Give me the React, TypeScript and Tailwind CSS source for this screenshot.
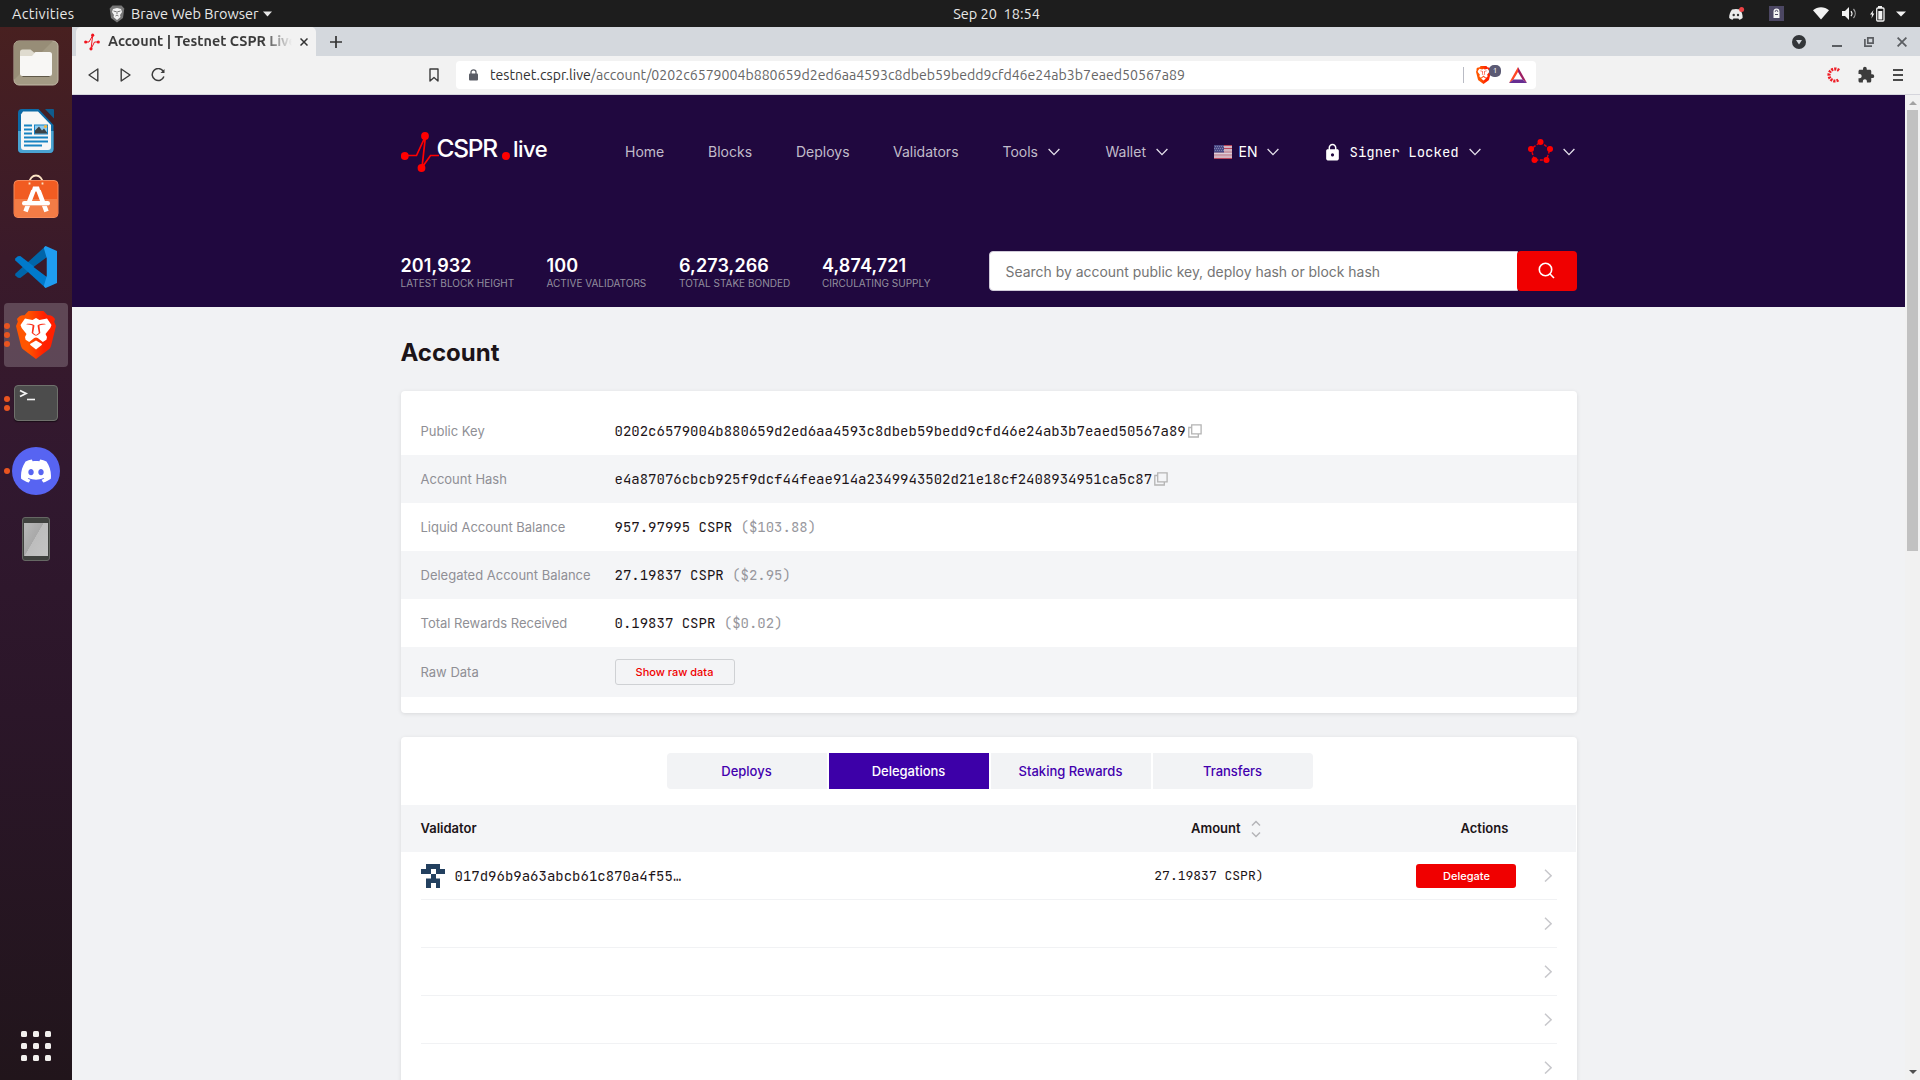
import React from "react";
import { SiDiscord } from "react-icons/si";
import { MdExtension, MdLock } from "react-icons/md";

/* ---------- shared ---------- */

const MONO = "font-['JetBrains_Mono','Liberation_Mono',monospace]";

function Chevron({ className = "" }: { className?: string }) {
  return (
    <svg className={`shrink-0 ${className}`} viewBox="0 0 12 8" width="12" height="8" fill="none" stroke="#e4e0ea" strokeWidth="1.3">
      <path d="M0.6 1 L6 6.6 L11.4 1" />
    </svg>
  );
}

/* ---------- desktop top bar ---------- */

function TopBar() {
  return (
    <header className="grid h-[27px] shrink-0 grid-cols-[1fr_auto_1fr] items-center bg-[#1d1d1d] text-[14.5px] leading-[27px] text-[#e8e8e8]">
      <div className="flex items-center pl-3">
        <span className="w-[97px] tracking-[0.3px]">Activities</span>
        <svg width="16" height="18" viewBox="0 0 16 18" className="mr-[6px]">
          <path d="M3.5 0.5h9l2.8 3-1.3 9.5L8 17.5 2 13 .7 3.5z" fill="#777" />
          <path d="M4 4l4-1 4 1 1 3-2 3 .5 2L8 15l-3.500-3L5 10 3 7z" fill="#f4f4f4" />
          <path d="M4.500 6l2.500.7M11.500 6 9 6.700M8 6v3M6.500 11l1.500-1 1.500 1" stroke="#777" strokeWidth="1" fill="none" />
        </svg>
        <span className="tracking-[-0.02px]">Brave Web Browser</span>
        <svg width="9" height="6" viewBox="0 0 9 6" className="ml-[5px]"><path d="M0 .5h9L4.500 5.500z" fill="#e8e8e8" /></svg>
      </div>
      <span className="mr-[-73px] whitespace-pre">Sep 20  18:54</span>
      <div className="flex items-center justify-end pr-[14px]">
        <svg width="17" height="14" viewBox="0 0 17 14" className="mr-[24px]">
          <path d="M4 2.500C7 1.800 9 1.800 12 2.500c2 2.700 2.800 5.600 2.600 8.500-1.200 1-2.300 1.500-3.400 1.800l-.8-1.300H5.400l-.8 1.300C3.500 12.500 2.400 12 1.200 11 1 8 2 5.200 4 2.500z" fill="#ececec" />
          <circle cx="5.700" cy="8" r="1.200" fill="#333" /><circle cx="10" cy="8" r="1.200" fill="#333" />
          <circle cx="13.600" cy="2.600" r="2.500" fill="#ec4245" />
        </svg>
        <svg width="15" height="15" viewBox="0 0 15 15" className="mr-[29px]">
          <rect width="15" height="15" fill="#4c4763" />
          <path d="M4.500 12V5.500a3 3 0 0 1 6 0V12z" fill="#f4f4f4" />
          <path d="M6.300 6V5.500a1.200 1.200 0 0 1 2.400 0V6M6 8.500h3" stroke="#4c4763" fill="none" />
        </svg>
        <svg width="16" height="13" viewBox="0 0 16 13" className="mr-[13px]"><path d="M0 3.200C4.500-.8 11.500-.8 16 3.200L8 12.500z" fill="#f2f2f2" /></svg>
        <svg width="16" height="13" viewBox="0 0 16 13" className="mr-[12px]">
          <path d="M0 4h3l4-4v13L3 9H0z" fill="#f2f2f2" />
          <path d="M9 4a4 4 0 0 1 0 5" stroke="#f2f2f2" strokeWidth="1.200" fill="none" />
          <path d="M11.500 2a7 7 0 0 1 0 9" stroke="#aaa" strokeWidth="1.200" fill="none" />
        </svg>
        <svg width="15" height="16" viewBox="0 0 15 16" className="mr-[11px]">
          <path d="M3.500 4 0 8.600h2L1.500 12.500 4.300 7.600H2.600z" fill="#f2f2f2" />
          <path d="M8 0h4v2H8z" fill="#f2f2f2" />
          <rect x="6.700" y="2" width="7.300" height="13" rx="1" stroke="#f2f2f2" strokeWidth="1.300" fill="none" />
          <path d="M8.300 5h4v8.500h-4z" fill="#f2f2f2" />
        </svg>
        <svg width="10" height="6" viewBox="0 0 10 6"><path d="M0 .5h10L5 5.500z" fill="#f2f2f2" /></svg>
      </div>
    </header>
  );
}

/* ---------- dock ---------- */

function DockItem({ dots = 0, active = false, children }: { dots?: number; active?: boolean; children: React.ReactNode }) {
  return (
    <div className={`relative flex h-16 w-16 items-center justify-center rounded ${active ? "bg-white/20" : ""}`}>
      <div className="absolute left-0 top-0 flex h-full flex-col justify-center gap-[3px]">
        {Array.from({ length: dots }, (_, i) => (
          <span key={i} className="h-1.5 w-1.5 rounded-full bg-[#e95420]" />
        ))}
      </div>
      {children}
    </div>
  );
}

function FilesIcon() {
  return (
    <svg width="46" height="46" viewBox="0 0 46 46">
      <rect x="1" y="1" width="44" height="44" rx="5" fill="#a39a84" stroke="#c1b9a6" />
      <path d="M1 40V6a5 5 0 0 1 5-5h34z" fill="#978d77" />
      <path d="M7 12a2.500 2.500 0 0 1 2.500-2.500h8l3.500 3H30V20H7z" fill="#dfdbcf" />
      <path d="M7 16h12l3.500-4H36.500a2.500 2.500 0 0 1 2.500 2.500V33.500a2.500 2.500 0 0 1-2.500 2.500h-27A2.500 2.500 0 0 1 7 33.500z" fill="#f8f7f5" />
      <path d="M9.500 36.500h27" stroke="#5f5848" strokeWidth="1" />
    </svg>
  );
}

function WriterIcon() {
  return (
    <svg width="38" height="46" viewBox="0 0 38 46">
      <path d="M5 1h16.500L36.500 17V41a4 4 0 0 1-4 4H5a4 4 0 0 1-4-4V5a4 4 0 0 1 4-4z" fill="#0d6aa6" />
      <path d="M1 23h35.500V41a4 4 0 0 1-4 4H5a4 4 0 0 1-4-4z" fill="#4aa3d2" />
      <path d="M6 3.500h15L34 17v22a3 3 0 0 1-3 3H7a3 3 0 0 1-3-3V6.500z" fill="#f7f7f7" />
      <path d="M28 1h8a1 1 0 0 1 1 1v8.500z" fill="#0f5c8e" />
      <path d="M7 17.500h8M7 21.500h8M7 25.500h8M7 29.500h24M7 33.500h24M7 37.500h18" stroke="#1783c2" strokeWidth="2" />
      <rect x="17" y="16.500" width="14" height="10" fill="#1783c2" />
      <rect x="18" y="17.500" width="12" height="8" fill="#8ecbf0" />
      <path d="M18 25.500v-3l4-4 3 4 2-2 3 4v1z" fill="#3c4245" />
      <circle cx="28.500" cy="18.500" r="1.600" fill="#f6b73c" />
    </svg>
  );
}

function SoftwareIcon() {
  return (
    <svg width="46" height="46" viewBox="0 0 46 46" className="-mt-[7px]">
      <path d="M16.500 9.500a6.500 7 0 0 1 13 0" stroke="#fbe3c4" strokeWidth="1.800" fill="none" />
      <rect x="1" y="7.500" width="44" height="37" rx="4" fill="#f15c22" stroke="#f58a5c" />
      <path d="M1.500 26h43v14.500a3.500 3.500 0 0 1-3.500 3.500H5a3.500 3.500 0 0 1-3.500-3.500z" fill="#f37c46" />
      <path d="M16.500 9.500v2M29.500 9.500v2" stroke="#fbe3c4" strokeWidth="1.800" />
      <path d="M12.500 38.500 20.500 17.500M33.500 38.500 25.500 17.500" stroke="#fff" strokeWidth="4.600" fill="none" />
      <path d="M20 13.500h6l1.500 5h-9z" fill="#fff" />
      <rect x="9" y="28" width="28" height="4.600" rx="2.300" fill="#fff" />
      <path d="M10 32.600h26" stroke="#f5a07b" strokeWidth="0.800" />
    </svg>
  );
}

function VsCodeIcon() {
  return (
    <svg width="42" height="42" viewBox="0 0 24 24">
      <path d="M17.500 0 .300 15.700l-.3 1 1.700 1.500L3 18.300 19 6z" fill="#0065a9" />
      <path d="M17.500 24 .2 8.300 0 7.300 1.600 5.800 3 5.700 19 18z" fill="#007acc" />
      <path d="M17.500 24c-.4-.3-.9-.8-1-1.300l1.500-5V6.400L16.500 1.300c.1-.5.5-1.100 1-1.300L24 2.800V21.200z" fill="#1f9cf0" />
      <path d="M18 6.500v11L10.600 12z" fill="#3a1a2a" />
    </svg>
  );
}

function BraveLion({ w, h }: { w: number; h: number }) {
  return (
    <svg width={w} height={h} viewBox="0 0 40 48">
      <defs>
        <linearGradient id="lion" x1="0" x2="1">
          <stop offset="0.3" stopColor="#ff5500" />
          <stop offset="0.7" stopColor="#ff2000" />
        </linearGradient>
      </defs>
      <path d="M12.500 0h15L31.500 4.300C35 3.800 37 5 39 8l-.8 2.700L40 15l-5 20c-.6 2-1.600 3-3 4L20 48 8 39c-1.400-1-2.400-2-3-4L0 15l1.800-4.300L1 8c2-3 4-4.200 7.500-3.700z" fill="url(#lion)" />
      <path d="M9 7.500 16.500 9 20 7l3.500 2L31 7.500 35.500 14l-1.200 3-4.800 6 1.500 3-.6 2.700-3.600 2.300-5-4L20 26.500 18.200 27l-5 4-3.600-2.300L9 26l1.500-3-4.800-6L4.500 14z" fill="#fff" />
      <path d="M10 13.200c3-.9 5.500 0 7.500.5l1 .7-1.300 7.600L20 24l2.800-2-1.300-7.600 1-.7c2-.5 4.500-1.400 7.500-.5-2.300.6-4.500.4-6.600 1.400l.9 7.400-2.500 2-1.800.8-1.800-.8-2.500-2 .9-7.400c-2.100-1-4.300-.8-6.600-1.400z" fill="#fb301b" />
      <path d="M14 33l6-3.500 6 3.500-.3 1L20 38.500 14.300 34z" fill="#fff" />
    </svg>
  );
}

function Dock() {
  return (
    <aside className="flex w-[72px] shrink-0 flex-col items-center gap-1 bg-[linear-gradient(180deg,#482020_0%,#3a1a2a_22%,#31182f_42%,#2b1629_65%,#21151b_100%)] pt-1">
      <DockItem><FilesIcon /></DockItem>
      <DockItem><WriterIcon /></DockItem>
      <DockItem><SoftwareIcon /></DockItem>
      <DockItem><VsCodeIcon /></DockItem>
      <DockItem dots={3} active><BraveLion w={40} h={48} /></DockItem>
      <DockItem dots={2}>
        <div className="h-9 w-11 rounded-[4px] border border-[#6f716c] bg-[#4c4c4c] shadow-[0_1px_1px_#1a0d18]">
          <svg width="22" height="18" viewBox="0 0 22 18" fill="none" stroke="#f4f4f4">
            <path d="M5 4.500 11 7.500 5 10.500" strokeWidth="1.800" />
            <path d="M12 13.500h8" strokeWidth="1.600" />
          </svg>
        </div>
      </DockItem>
      <DockItem dots={1}>
        <div className="flex h-12 w-12 items-center justify-center rounded-full bg-[#5764f2]"><SiDiscord size={30} color="#fff" /></div>
      </DockItem>
      <DockItem>
        <div className="flex h-11 w-7 flex-col rounded-[3px] border border-[#666864] bg-[#40423f] px-px pb-1 pt-[5px]">
          <div className="flex-1 bg-[linear-gradient(120deg,#b9b9b9_0%,#a9a9a9_45%,#bdbdbd_46%,#c4c4c4_100%)]" />
        </div>
      </DockItem>
      <div className="mb-[19px] mt-auto grid grid-cols-3 gap-1.5">
        {Array.from({ length: 9 }, (_, i) => (
          <span key={i} className="h-1.5 w-1.5 rounded-[1.5px] bg-[#f2f0ee]" />
        ))}
      </div>
    </aside>
  );
}

/* ---------- browser chrome ---------- */

function Favicon() {
  return (
    <svg width="16" height="18" viewBox="0 0 16 18" fill="none" stroke="#f0141e" strokeWidth="1">
      <path d="M1.500 9h3.500L8.700 2.500 7 16l3.500-7H15" />
      <g fill="#f0141e" stroke="none">
        <circle cx="1.700" cy="9" r="1.600" /><circle cx="14.300" cy="9" r="1.600" /><circle cx="8.700" cy="2.200" r="1.600" /><circle cx="7" cy="15.800" r="1.600" />
      </g>
    </svg>
  );
}

function TabStrip() {
  return (
    <div className="flex h-[29px] shrink-0 items-center bg-[#d4d8dd] pl-1">
      <div className="flex h-full w-[240px] items-center rounded-t-[5px] bg-[#f2f2f2] pl-2">
        <Favicon />
        <span className="ml-2 w-[184px] overflow-hidden whitespace-nowrap bg-[linear-gradient(90deg,#3b3b3b_84%,#33333300_100%)] bg-clip-text text-[14.4px] font-bold text-transparent">
          Account | Testnet CSPR Live
        </span>
        <svg width="8" height="8" viewBox="0 0 8 8" className="ml-[8px]" stroke="#333" strokeWidth="1.500"><path d="M.5.5l7 7M7.500.5l-7 7" /></svg>
      </div>
      <svg width="12" height="12" viewBox="0 0 12 12" className="ml-[14px]" stroke="#333" strokeWidth="1.700"><path d="M6 0v12M0 6h12" /></svg>
      <div className="ml-auto flex items-center pr-[13px]">
        <svg width="14" height="14" viewBox="0 0 14 14" className="mr-[26px]"><circle cx="7" cy="7" r="7" fill="#333639" /><path d="M4 5h6L7 9.500z" fill="#d4d8dd" /></svg>
        <span className="mr-[22px] mt-[8px] h-[2px] w-[10px] bg-[#5b5e62]" />
        <svg width="10" height="10" viewBox="0 0 10 10" className="mr-[23px]" stroke="#5b5e62" strokeWidth="1.700" fill="none"><path d="M3.800.9h5.300v5.300H3.800zM.9 2v7.100h7.100" /></svg>
        <svg width="10" height="10" viewBox="0 0 10 10" stroke="#5b5e62" strokeWidth="1.800"><path d="M.6.6l8.800 8.800M9.400.6.600 9.400" /></svg>
      </div>
    </div>
  );
}

function Toolbar() {
  return (
    <div className="flex h-[39px] shrink-0 items-center border-b border-[#d5d5dc] bg-[#f2f2f2]">
      <svg width="11" height="14" viewBox="0 0 11 14" className="ml-[16px]" fill="none" stroke="#3c3c3c" strokeWidth="1.400" strokeLinejoin="round"><path d="M9.800 1v12L1 7z" /></svg>
      <svg width="11" height="14" viewBox="0 0 11 14" className="ml-[21px]" fill="none" stroke="#3c3c3c" strokeWidth="1.400" strokeLinejoin="round"><path d="M1.200 1v12L10 7z" /></svg>
      <svg width="14" height="14" viewBox="0 0 14 14" className="ml-[20px]" fill="none" stroke="#3c3c3c" strokeWidth="1.500"><path d="M12.200 3.200A6 6 0 1 0 12.900 8.500" /><path d="M13.500 1v4h-4z" fill="#3c3c3c" stroke="none" /></svg>
      <svg width="10" height="14" viewBox="0 0 10 14" className="ml-[264px]" fill="none" stroke="#3c3c3c" strokeWidth="1.400" strokeLinejoin="round"><path d="M1 1h8v12L5 9.500 1 13z" /></svg>
      <div className="ml-[17px] flex h-7 w-[1080px] items-center rounded bg-white pl-[13px] text-[14.12px]">
        <svg width="9" height="12" viewBox="0 0 9 12"><rect y="4.500" width="9" height="7" rx="1" fill="#5a5d66" /><path d="M2 5V3a2.500 2.200 0 0 1 5 0v2" stroke="#5a5d66" strokeWidth="1.300" fill="none" /></svg>
        <span className="ml-[12px] whitespace-nowrap pt-[2px] text-[#666]">
          <span className="text-[#333]">testnet.cspr.live</span>/account/0202c6579004b880659d2ed6aa4593c8dbeb59bedd9cfd46e24ab3b7eaed50567a89
        </span>
        <span className="ml-auto h-4 w-px bg-[#b9bbc4]" />
        <div className="relative ml-[12px] mr-[17px] h-[18px] w-4">
          <BraveLion w={15} h={18} />
          <span className="absolute -top-[1px] left-[13px] flex h-3 w-3 items-center justify-center rounded-[5px] bg-[#5b5a74] text-[8px] leading-none text-white">1</span>
        </div>
        <svg width="18" height="16" viewBox="0 0 18 16" className="mr-[9px]">
          <path d="M9 0v5L4.500 12.500 0 16z" fill="#ff4724" /><path d="M9 0v5l4.500 7.500L18 16z" fill="#9e1f63" /><path d="M0 16l4.500-3.500h9L18 16z" fill="#662d91" />
        </svg>
      </div>
      <svg width="14" height="16" viewBox="0 0 14 16" className="ml-auto mr-[17px]" fill="none" stroke="#ee1c25" strokeWidth="3.200" strokeDasharray="2 1">
        <path d="M13 3.500A6 6 0 1 0 13 12.500" />
      </svg>
      <MdExtension size={18} color="#3c3c3c" className="mr-[18px]" />
      <svg width="10" height="12" viewBox="0 0 10 12" className="mr-[17px]" stroke="#4a4a4a" strokeWidth="1.800"><path d="M0 1h10M0 6h10M0 11h10" /></svg>
    </div>
  );
}

/* ---------- site header ---------- */

function Logo() {
  return (
    <div className="flex h-[40px] w-[224.5px] shrink-0">
      <svg width="38" height="40" viewBox="0 0 38 40" fill="none" stroke="#f00" strokeWidth="1.700">
        <path d="M4 23.500h11.500L24.500 4 21 35.500l8.500-12H38" />
        <g fill="#f00" stroke="none"><circle cx="3.800" cy="24" r="3.900" /><circle cx="24" cy="4" r="3.900" /><circle cx="20.500" cy="36" r="3.900" /></g>
      </svg>
      <span className="-ml-[2px] mt-px flex text-[24.5px] font-medium leading-[30px] tracking-[-1.250px] text-white">
        CSPR
        <span className="ml-[5px] mr-[3px] mt-[19px] h-2 w-2 rounded-full bg-[#f00]" />
        <span className="mt-px text-[22px] tracking-[-0.500px]">live</span>
      </span>
    </div>
  );
}

function Flag() {
  return (
    <svg width="18" height="14" viewBox="0 0 18 14">
      <rect width="18" height="14" fill="#c99aa8" />
      <path d="M0 .5h18M0 3.500h18M0 13.500h18" stroke="#b8435a" strokeWidth="1" />
      <path d="M0 2h18M0 5h18M0 8.500h18M0 12h18" stroke="#dccdd8" strokeWidth="1" />
      <rect width="10" height="7.500" fill="#4a4a86" />
      <path d="M1 1.500h9M0 3.500h9M1 5.500h9" stroke="#8d8db5" strokeWidth="0.800" strokeDasharray="1 1" />
    </svg>
  );
}

function CasperPentagon() {
  const pts: [number, number][] = [[12.5, 3], [22, 10], [18.5, 21], [6.5, 21], [3, 10]];
  return (
    <svg width="25" height="24" viewBox="0 0 25 24" className="-mt-[2px]">
      <path d="M12.500 3 22 10 18.500 21H6.500L3 10z" fill="none" stroke="#e8000b" strokeWidth="1.400" strokeDasharray="3 1.500" />
      {pts.map(([x, y]) => <circle key={`${x}-${y}`} cx={x} cy={y} r="3" fill="#f00" />)}
    </svg>
  );
}

const stats = [
  { value: "201,932", label: "LATEST BLOCK HEIGHT", w: "w-[146px]" },
  { value: "100", label: "ACTIVE VALIDATORS", w: "w-[132.5px]" },
  { value: "6,273,266", label: "TOTAL STAKE BONDED", w: "w-[143px]" },
  { value: "4,874,721", label: "CIRCULATING SUPPLY", w: "w-[166.5px]" },
];

function SiteHeader() {
  return (
    <div className="h-[212px] bg-[#20083f]">
      <div className="mx-auto flex w-[1176px] flex-col">
        <nav className="mt-[37px] flex h-10 items-center text-[14px] text-[#c1bcca]">
          <Logo />
          <span className="w-[83px] pb-[2px]">Home</span>
          <span className="w-[88px] pb-[2px]">Blocks</span>
          <span className="w-[97px] pb-[2px]">Deploys</span>
          <span className="w-[109.5px] pb-[2px]">Validators</span>
          <span className="flex w-[103px] items-center gap-[10px]"><span className="pb-[2px]">Tools</span><Chevron /></span>
          <span className="flex w-[108px] items-center gap-[10px]"><span className="pb-[2px]">Wallet</span><Chevron /></span>
          <span className="flex w-[111px] items-center text-white"><Flag /><span className="ml-[7px] pb-[2px]">EN</span><Chevron className="ml-[10px]" /></span>
          <span className="flex w-[203px] items-center text-white">
            <MdLock size={19} className="-ml-[2px] mr-[8px]" />
            <span className={`${MONO} pt-px text-[14px]`}>Signer Locked</span>
            <Chevron className="ml-auto mr-[47px]" />
          </span>
          <CasperPentagon />
          <Chevron className="ml-[10px]" />
        </nav>
        <div className="mt-[79px] flex h-10">
          {stats.map((s) => (
            <div key={s.label} className={`${s.w} pt-1`}>
              <div className="text-[18px] font-semibold leading-[22px] tracking-[0.1px] text-white">{s.value}</div>
              <div className="-mt-px whitespace-nowrap text-[10px] leading-[14px] text-[#938f9e]">{s.label}</div>
            </div>
          ))}
          <div className="flex h-10 flex-1">
            <div className="flex flex-1 items-center rounded-l border border-[#cfcad8] bg-white pl-4 pt-[2px] text-[13.95px] text-[#757575]">
              Search by account public key, deploy hash or block hash
            </div>
            <div className="-ml-px flex w-[60px] items-center justify-center rounded bg-[#f00000]">
              <svg width="17" height="17" viewBox="0 0 17 17" fill="none" stroke="#fff" strokeWidth="1.600" className="-mt-px"><circle cx="7.500" cy="7.500" r="6.200" /><path d="M11.800 11.800 16 16" /></svg>
            </div>
          </div>
        </div>
      </div>
    </div>
  );
}

/* ---------- account card ---------- */

function CopyIcon() {
  return (
    <svg width="14" height="14" viewBox="0 0 14 14" className="ml-[2px]" fill="none" stroke="#b4b4b4" strokeWidth="1.300">
      <path d="M3.700.9h9.400v9H3.700z" /><path d="M3.500 3.500H.8v9.500h9.500v-3" />
    </svg>
  );
}

function InfoRow({ label, shaded, children }: { label: string; shaded?: boolean; children: React.ReactNode }) {
  return (
    <div className={`flex min-h-12 items-center pl-5 ${shaded ? "bg-[#f4f5f7]" : ""}`}>
      <span className="w-[194px] shrink-0 pt-[2px] text-[13px] text-[#8f8f95]">{label}</span>
      <span className={`flex items-center whitespace-pre text-[14px] text-[#1c1418] ${MONO}`}>{children}</span>
    </div>
  );
}

function Usd({ children }: { children: React.ReactNode }) {
  return <span className="text-[#97979d]"> ({children})</span>;
}

function AccountCard() {
  return (
    <section className="mt-[23px] rounded bg-white py-4 shadow-[0_1px_4px_rgba(0,0,0,0.1)]">
      <InfoRow label="Public Key">0202c6579004b880659d2ed6aa4593c8dbeb59bedd9cfd46e24ab3b7eaed50567a89<CopyIcon /></InfoRow>
      <InfoRow label="Account Hash" shaded>e4a87076cbcb925f9dcf44feae914a2349943502d21e18cf2408934951ca5c87<CopyIcon /></InfoRow>
      <InfoRow label="Liquid Account Balance">957.97995 CSPR<Usd>$103.88</Usd></InfoRow>
      <InfoRow label="Delegated Account Balance" shaded>27.19837 CSPR<Usd>$2.95</Usd></InfoRow>
      <InfoRow label="Total Rewards Received">0.19837 CSPR<Usd>$0.02</Usd></InfoRow>
      <div className="flex h-[50px] items-center bg-[#f4f5f7] pl-5">
        <span className="w-[194px] pt-[2px] text-[13px] text-[#8f8f95]">Raw Data</span>
        <button className="h-[26px] w-[120px] rounded-[3px] border border-[#cfd1d4] bg-[#f3f4f6] text-[11px] font-medium text-[#f00000]">Show raw data</button>
      </div>
    </section>
  );
}

/* ---------- delegations card ---------- */

const tabs = ["Deploys", "Delegations", "Staking Rewards", "Transfers"];

function Identicon() {
  return (
    <svg width="24" height="24" viewBox="0 0 24 24" fill="#23405f">
      <path d="M5 0h14v5h5v5h-9v4.500h4v9.500h-4v-5h-5v5H5v-9.500h5V10H0V5h5z" />
      <path d="M10 5h5v5h-5z" fill="#fff" />
      <path d="M10 10h5v4.500h-5z" />
    </svg>
  );
}

function RowArrow() {
  return <svg width="8" height="13" viewBox="0 0 8 13" fill="none" stroke="#c8c8cc" strokeWidth="1.500" className="shrink-0"><path d="M1 .8 7.100 6.700 1 12.500" /></svg>;
}

function DelegationsCard() {
  return (
    <section className="mt-6 h-[400px] rounded-t bg-white pt-4 shadow-[0_1px_4px_rgba(0,0,0,0.1)]">
      <div className="flex justify-center gap-[2px] pl-[2px]">
        {tabs.map((t) => (
          <div
            key={t}
            className={`flex h-9 w-[160px] items-center justify-center pt-[2px] text-[13px] font-medium first:rounded-l last:rounded-r ${
              t === "Delegations" ? "bg-[#3d00a8] text-white" : "bg-[#f2f3f5] text-[#4300ae]"
            }`}
          >
            {t}
          </div>
        ))}
      </div>
      <div className="mr-px mt-4 flex h-[47px] items-center bg-[#f4f5f7] pl-5 text-[13px] font-semibold text-[#1c1418]">
        <span className="w-[770.5px] pt-px">Validator</span>
        <span className="w-[59.5px] pt-px">Amount</span>
        <svg width="10" height="18" viewBox="0 0 10 18" fill="none" stroke="#b4b4b8" strokeWidth="1.500"><path d="M1 5.500 5 1.500 9 5.500M1 12.500 5 16.500 9 12.500" /></svg>
        <span className="ml-[200px] pt-px">Actions</span>
      </div>
      <div className="mx-5">
        <div className="flex h-12 items-center border-b border-[#f1f2f4] pr-[5px]">
          <Identicon />
          <span className={`ml-[10px] w-[524px] pt-px text-[14px] text-[#1c1418] ${MONO}`}>017d96b9a63abcb61c870a4f55…</span>
          <span className={`w-[285px] text-right text-[13px] text-[#1c1418] ${MONO}`}>27.19837 CSPR)</span>
          <button className="ml-[152px] h-6 w-[100px] rounded-[3px] bg-[#f00000] pl-[2px] pt-px text-[11px] font-medium text-white">Delegate</button>
          <span className="ml-auto"><RowArrow /></span>
        </div>
        {[0, 1, 2, 3].map((i) => (
          <div key={i} className="flex h-12 items-center justify-end border-b border-[#f1f2f4] pr-[5px]"><RowArrow /></div>
        ))}
      </div>
    </section>
  );
}

function Scrollbar() {
  return (
    <div className="flex w-[15px] shrink-0 flex-col items-center bg-[#f1f1f1]">
      <svg width="8" height="4" viewBox="0 0 8 4" className="mt-[6px]"><path d="M4 0l4 4H0z" fill="#a3a3a3" /></svg>
      <div className="mt-[5px] h-[441px] w-[11px] bg-[#c1c1c1]" />
      <svg width="8" height="4" viewBox="0 0 8 4" className="mb-[6px] mt-auto"><path d="M0 0h8L4 4z" fill="#505050" /></svg>
    </div>
  );
}

export default function App() {
  return (
    <div className="flex h-[1080px] w-[1920px] flex-col overflow-hidden font-['Ubuntu','Noto_Sans',sans-serif]">
      <TopBar />
      <div className="flex min-h-0 flex-1">
        <Dock />
        <main className="flex min-w-0 flex-1 flex-col">
          <TabStrip />
          <Toolbar />
          <div className="flex min-h-0 flex-1">
            <div className="min-w-0 flex-1 overflow-hidden bg-[#f1f2f4] font-['Inter',sans-serif]">
              <SiteHeader />
              <div className="mx-auto w-[1176px]">
                <h1 className="pt-[31px] text-[24px] font-bold leading-[30px] text-[#1c1418]">Account</h1>
                <AccountCard />
                <DelegationsCard />
              </div>
            </div>
            <Scrollbar />
          </div>
        </main>
      </div>
    </div>
  );
}
